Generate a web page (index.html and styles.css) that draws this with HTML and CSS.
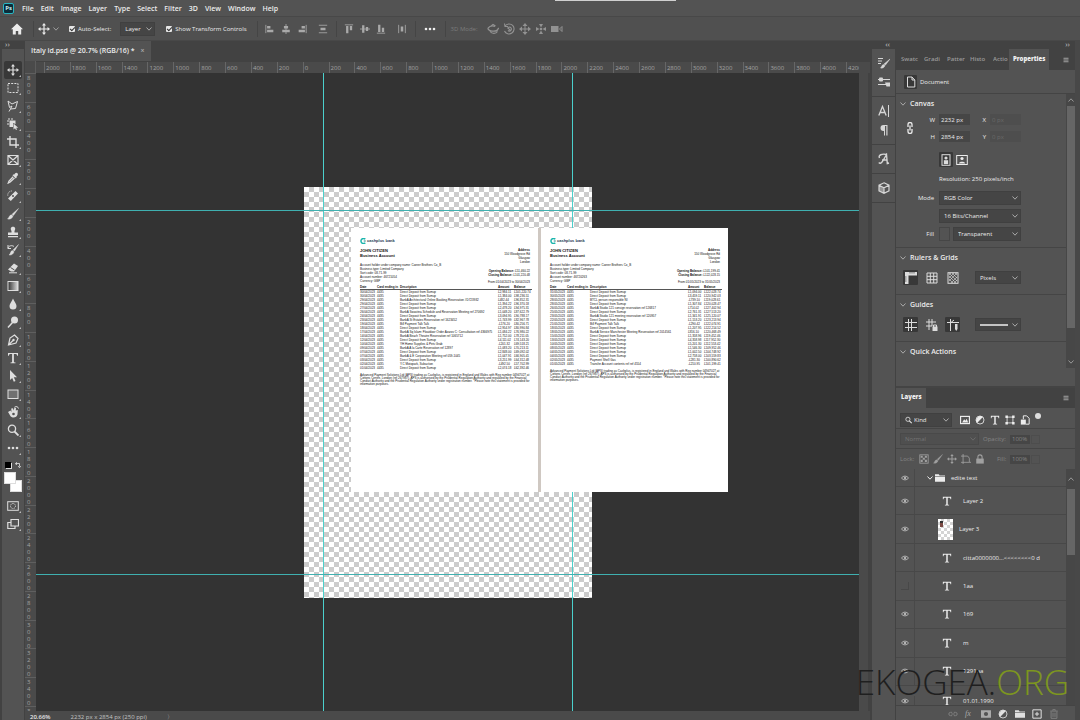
FILE: index.html
```html
<!DOCTYPE html>
<html lang="en">
<head>
<meta charset="utf-8">
<title>Italy id.psd @ 20.7% (RGB/16)</title>
<link rel="stylesheet" href="styles.css">
</head>
<body>
<svg class="sprite" aria-hidden="true">
  <symbol id="chev" viewBox="0 0 8 8"><path d="M1.500 2.500 4 5.200 6.500 2.500" fill="none" stroke="currentColor"/></symbol>
  <symbol id="home" viewBox="0 0 12 12"><path d="M6 .5 0 6.200h1.800V11.500H4.800V8h2.400v3.500h3V6.200H12z"/></symbol>
  <symbol id="move" viewBox="0 0 12 12"><path d="M6 0 8 2.500H6.600V5.400H9.500V4L12 6 9.500 8V6.600H6.600V9.500H8L6 12 4 9.500H5.400V6.600H2.500V8L0 6 2.500 4V5.400H5.400V2.500H4z"/></symbol>
  <symbol id="marquee" viewBox="0 0 12 12"><rect x="1" y="1.500" width="10" height="9" fill="none" stroke="currentColor" stroke-dasharray="2 1.200"/></symbol>
  <symbol id="lasso" viewBox="0 0 12 12"><path d="M1 1 5 4 10.500 1.500 8.500 8.500 3.500 9 5 6 2.500 7.500ZM3.500 9 2 11.500" fill="none" stroke="currentColor"/></symbol>
  <symbol id="objsel" viewBox="0 0 12 12"><path d="M1 7V1h6" fill="none" stroke="currentColor" stroke-dasharray="2 1"/><path d="M2.500 2.500h6v3.500L6 5v4H2.500z"/><path d="M6.500 5.500v6L8 10.200 9 12l1-.5-.8-1.800h2z"/></symbol>
  <symbol id="crop" viewBox="0 0 12 12"><path d="M3 0V9H12M0 3H9V12" fill="none" stroke="currentColor" stroke-width="1.400"/></symbol>
  <symbol id="frame" viewBox="0 0 12 12"><path d="M1 1.500H11V10.500H1ZM1 1.500 11 10.500M11 1.500 1 10.500" fill="none" stroke="currentColor" stroke-width="1.200"/></symbol>
  <symbol id="dropper" viewBox="0 0 12 12"><path d="M8 1.500c1.500-2 4 .3 2.500 2.200L9.300 5l.5.600-1 1L5.500 3.300l1-1 .500.400z"/><path d="M6.200 4.700 2 9l-.7 2L3.200 10 7.500 6" fill="none" stroke="currentColor" stroke-width="1.300"/></symbol>
  <symbol id="heal" viewBox="0 0 12 12"><path d="M8.500 1 11 3.500 3.800 11 1 8.500z"/><path d="M5 6h2M6 5v2" stroke="#535353"/><path d="M.8 5.500A4 4 0 0 1 5 1" fill="none" stroke="currentColor" stroke-dasharray="1 1"/></symbol>
  <symbol id="brush" viewBox="0 0 12 12"><path d="M11.500.5 6.500 7.500 5 6.200ZM4.500 6.800 6 8C5.500 10.500 3 11.500.5 11 2.300 10 1.800 7.200 4.500 6.800Z" stroke="currentColor" stroke-width=".4"/></symbol>
  <symbol id="stamp" viewBox="0 0 12 12"><path d="M4.500 5C3 2.500 4 .8 6 .8S9 2.500 7.500 5V6.500H11V9H1V6.500H4.500ZM1 10H11v1.200H1z"/></symbol>
  <symbol id="history" viewBox="0 0 12 12"><path d="M11.500.5 7.500 7 6 6ZM5.500 6.500 7 7.800C6.500 10 4.500 11.500 2 11 3.800 10 3 7.200 5.500 6.500Z" stroke="currentColor" stroke-width=".4"/><path d="M1 4.500C1.500 1.500 5 1 7 2.500M1 1V4.500H4" fill="none" stroke="currentColor"/></symbol>
  <symbol id="eraser" viewBox="0 0 12 12"><path d="M7 1.500 11 4 7 9.500H4L1 7.500z"/><path d="M3.500 5.500 7.500 8" stroke="#535353"/><path d="M2 10.800H10" stroke="currentColor"/></symbol>
  <symbol id="grad" viewBox="0 0 12 12"><linearGradient id="gf"><stop offset="0" stop-color="#333"/><stop offset="1" stop-color="#ddd"/></linearGradient><rect x="1" y="1.500" width="10" height="9" fill="url(#gf)" stroke="currentColor"/></symbol>
  <symbol id="blur" viewBox="0 0 12 12"><path d="M6 .5C7 3.500 9.500 5.500 9.500 8a3.500 3.500 0 0 1-7 0C2.500 5.500 5 3.500 6 .5Z"/></symbol>
  <symbol id="dodge" viewBox="0 0 12 12"><circle cx="7.500" cy="4" r="3.500"/><path d="M5.500 6.500 1 11.500" stroke="currentColor" stroke-width="1.500"/></symbol>
  <symbol id="pen" viewBox="0 0 12 12"><path d="M7.500 1 11 4.500 9 9 1.500 11 3 4Z M1.500 11 6 6.500" fill="none" stroke="currentColor" stroke-width="1.200"/><circle cx="6.500" cy="6" r="1.200"/></symbol>
  <symbol id="type" viewBox="0 0 12 12"><path d="M1 1H11V3.800H10.200C10 2.500 9.500 2 8.500 2H6.900V9.500c0 .8.400 1 1.600 1V11.300H3.500V10.500c1.200 0 1.600-.2 1.600-1V2H3.500C2.500 2 2 2.500 1.800 3.800H1z"/></symbol>
  <symbol id="arrow" viewBox="0 0 12 12"><path d="M3 0 10 7.200H6.800L8.500 11 6.800 11.700 5.200 8 3 10z"/></symbol>
  <symbol id="rect" viewBox="0 0 12 12"><rect x="1" y="2" width="10" height="8.500" fill="#707070" stroke="currentColor"/></symbol>
  <symbol id="hand" viewBox="0 0 12 12"><path d="M1 6 3.500 4.500 4.500 6 4.200 2.500 6 2.200 6.500 4.500 7.500 1.500 9 2 8.800 4.500 10.800 4 10.500 8.500C10 11 7.500 12 5 11.300 3 10.500 2.500 8 1 6Z"/><path d="M7.500 1.200C9 0 11 .5 11.500 2.500" fill="none" stroke="currentColor"/><circle cx="6.500" cy="8" r="1.300" fill="#535353"/></symbol>
  <symbol id="zoom" viewBox="0 0 12 12"><circle cx="5" cy="4.800" r="3.600" fill="none" stroke="currentColor" stroke-width="1.300"/><path d="M7.500 7.500 11.500 11.500" stroke="currentColor" stroke-width="1.800"/></symbol>
  <symbol id="dots" viewBox="0 0 12 12"><circle cx="2" cy="6" r="1.300"/><circle cx="6" cy="6" r="1.300"/><circle cx="10" cy="6" r="1.300"/></symbol>
  <symbol id="mask" viewBox="0 0 12 12"><rect x=".7" y="1.700" width="10.600" height="8.600" fill="none" stroke="currentColor"/><circle cx="6" cy="6" r="2.500" fill="none" stroke="currentColor" stroke-dasharray="1 .7"/></symbol>
  <symbol id="screen" viewBox="0 0 12 12"><path d="M4 1.500H11.500V8H4ZM4 4.500H.8V10.500H8V8" fill="none" stroke="currentColor" stroke-width="1.200"/></symbol>
  <symbol id="al" viewBox="0 0 12 12"><path d="M1 1v10" stroke="currentColor"/><path d="M2.500 2.500h4v2.800h-4zM2.500 7h7.500v2.800H2.500z"/></symbol>
  <symbol id="ac" viewBox="0 0 12 12"><path d="M6 0v12" stroke="currentColor"/><path d="M3.500 2.500h5v2.800h-5zM1.500 7h9v2.800h-9z"/></symbol>
  <symbol id="ar" viewBox="0 0 12 12"><path d="M11 1v10" stroke="currentColor"/><path d="M5.500 2.500h4v2.800h-4zM2 7h7.500v2.800H2z"/></symbol>
  <symbol id="dv" viewBox="0 0 12 12"><path d="M1 1.500h10M1 10.500h10" stroke="currentColor"/><path d="M3 4.500h6v3H3z"/></symbol>
  <symbol id="at" viewBox="0 0 12 12"><path d="M1 1h10" stroke="currentColor"/><path d="M2.500 2.500h2.800V11H2.500zM7 2.500h2.800v5H7z"/></symbol>
  <symbol id="am" viewBox="0 0 12 12"><path d="M0 6h12" stroke="currentColor"/><path d="M2.500 1.500h2.800v9H2.500zM7 3.500h2.800v5H7z"/></symbol>
  <symbol id="ab" viewBox="0 0 12 12"><path d="M1 11h10" stroke="currentColor"/><path d="M2.500 1h2.800v8.500H2.500zM7 4.500h2.800v5H7z"/></symbol>
  <symbol id="dh" viewBox="0 0 12 12"><path d="M2 1v10M10 1v10" stroke="currentColor"/><path d="M4.500 3h3v6h-3z"/></symbol>
  <symbol id="orbit" viewBox="0 0 12 12"><path d="M11 6A5 2.500 0 1 1 8 3.300M3 8.500C5 11 9 11 10.500 8.500M3.500 3.500 6 1.500 8.500 3M10.500 6.500 12 5" fill="none" stroke="currentColor" stroke-width="1.200"/></symbol>
  <symbol id="roll" viewBox="0 0 12 12"><path d="M2 3A5 5 0 1 1 1.500 8M1.500.5 2 3.500H5M4.500 5.500A2 2 0 1 1 5 7.500M4.500 4.500 8 8" fill="none" stroke="currentColor" stroke-width="1.100"/></symbol>
  <symbol id="pan3" viewBox="0 0 12 12"><path d="M6 0 8.500 3H3.500ZM6 12 3.500 9H8.500ZM0 6 3 3.500V8.500ZM12 6 9 8.500V3.500Z"/><path d="M6 2v8M2 6h8" stroke="currentColor"/></symbol>
  <symbol id="slide3" viewBox="0 0 12 12"><circle cx="6" cy="6" r="1.300"/><path d="M6 4.500 4 1H8ZM6 7.500 8 11H4ZM4.500 6 1 8V4ZM7.500 6 11 4V8Z"/></symbol>
  <symbol id="cam" viewBox="0 0 12 12"><path d="M0 3H7.500V9H0Z"/><path d="M11 3.500 8.500 6 11 8.500Z" fill="none" stroke="currentColor"/></symbol>
  <symbol id="bset" viewBox="0 0 12 12"><path d="M0 1.500h5M0 4h4M0 6.500h3" stroke="currentColor"/><path d="M12 2 7.500 8 6 7ZM5.500 7.500 7 8.500C6.500 10.500 4.500 11.500 2.500 11 4 10 3.500 8 5.500 7.500Z" stroke="currentColor" stroke-width=".5"/></symbol>
  <symbol id="adj" viewBox="0 0 12 12"><path d="M0 3.500h12M0 8.500h12" stroke="currentColor" stroke-width="1.200"/><rect x="1" y="1.500" width="4" height="4" rx="1"/><path d="M7 6.500h5v4H8.500z"/></symbol>
  <symbol id="char" viewBox="0 0 12 12"><path d="M.8 10.500 4.500 1.500 8.200 10.500M2 7.500H7" fill="none" stroke="currentColor" stroke-width="1.300"/><path d="M10.500 0v12" stroke="currentColor"/></symbol>
  <symbol id="para" viewBox="0 0 12 12"><path d="M9.500 1H5.500a3 3 0 0 0 0 6H6v4.500h1V2h1.300v9.500h1.200z"/></symbol>
  <symbol id="glyph" viewBox="0 0 12 12"><path d="M.8 9.500C3 12 5 8 8.500 1.500L9.300 10.500 11 10M4 7H9M1.500 5C0 2 4 .5 8.500 1.500" fill="none" stroke="currentColor" stroke-width="1.400"/></symbol>
  <symbol id="cube" viewBox="0 0 12 12"><path d="M6 .8 11 3.200V8.800L6 11.300 1 8.800V3.200ZM1 3.200 6 5.800 11 3.200M6 5.800V11.300" fill="none" stroke="currentColor" stroke-width="1.200"/><path d="M6 6 1 3.500V8.800L6 11z" opacity=".5"/></symbol>
  <symbol id="doc" viewBox="0 0 12 12"><path d="M2.500 1H7L9.800 4V11H2.500ZM7 1V4H9.800" fill="none" stroke="currentColor"/></symbol>
  <symbol id="link" viewBox="0 0 12 12"><path d="M4 5V2.500a2 2 0 0 1 4 0V5M4 7V9.500a2 2 0 0 0 4 0V7M6 3.500v5" fill="none" stroke="currentColor" stroke-width="1.300"/></symbol>
  <symbol id="chain" viewBox="0 0 12 12"><path d="M5 4H3a2 2 0 0 0 0 4H5M7 4H9a2 2 0 0 1 0 4H7M4 6h4" fill="none" stroke="currentColor" stroke-width="1.200"/></symbol>
  <symbol id="port" viewBox="0 0 12 12"><rect x="2" y=".7" width="8" height="10.600" fill="none" stroke="currentColor"/><circle cx="6" cy="4" r="1.600"/><path d="M3.800 6.200h4.400v4H3.800z"/></symbol>
  <symbol id="land" viewBox="0 0 12 12"><rect x=".7" y="1.500" width="10.600" height="9" fill="none" stroke="currentColor"/><circle cx="6" cy="4.500" r="1.600"/><path d="M2.800 9.500C3 7 9 7 9.200 9.500z"/></symbol>
  <symbol id="ruler" viewBox="0 0 12 12"><path d="M0 0H12V3.500H3.500V12H0z"/><path d="M5 0v1.500M7 0v1.500M9 0v1.500M0 5h1.500M0 7h1.500M0 9h1.500" stroke="#333" stroke-width=".7"/></symbol>
  <symbol id="grid" viewBox="0 0 12 12"><path d="M1 1H11V11H1ZM4.300 1V11M7.700 1V11M1 4.300H11M1 7.700H11" fill="none" stroke="currentColor"/></symbol>
  <symbol id="pix" viewBox="0 0 12 12"><rect x="1" y=".7" width="10" height="10.600" fill="none" stroke="currentColor"/><path d="M2 3 4 1M2 6 7 1M2 9 10 1M4 11 10 5M7 11 10 8M8 1 10 3M5 1 10 6M2 1 10 9M2 4 9 11M2 7 6 11" stroke="currentColor" stroke-width=".6"/></symbol>
  <symbol id="guide" viewBox="0 0 12 12"><path d="M3.500 0V12M6.500 0V12M0 3.500H12M0 8.500H12" stroke="currentColor"/></symbol>
  <symbol id="glock" viewBox="0 0 12 12"><path d="M3 0V11M6 0V7M0 3H10M0 7H6" stroke="currentColor"/><path d="M6.500 7.500h5V12h-5z"/><path d="M7.500 8V6h3v2" fill="none" stroke="currentColor"/></symbol>
  <symbol id="gsmart" viewBox="0 0 12 12"><path d="M3.500 0V12M0 3.500H12M4 3.500 7 1" stroke="currentColor"/><path d="M8 5h2.500v5L9.200 12 8 10z"/></symbol>
  <symbol id="menu" viewBox="0 0 12 12"><path d="M1 2.500h10M1 6h10M1 9.500h10" stroke="currentColor" stroke-width="1.600"/></symbol>
  <symbol id="image" viewBox="0 0 12 12"><rect x=".7" y="1.700" width="10.600" height="8.600" fill="none" stroke="currentColor" stroke-width="1.400"/><path d="M2.500 9 5 5 6.500 7 8 4.500 9.800 9z"/></symbol>
  <symbol id="half" viewBox="0 0 12 12"><circle cx="6" cy="6" r="4.800" fill="none" stroke="currentColor"/><path d="M2.500 9.500A5 5 0 0 1 9.500 2.500z"/></symbol>
  <symbol id="shape" viewBox="0 0 12 12"><path d="M2.500 2.500h7v7h-7z" fill="none" stroke="currentColor"/><path d="M.5.500h3v3h-3zM8.500.5h3v3h-3zM.5 8.500h3v3h-3zM8.500 8.500h3v3h-3z"/></symbol>
  <symbol id="smart" viewBox="0 0 12 12"><path d="M4 5V1H8L11 4V11H7" fill="none" stroke="currentColor" stroke-width="1.200"/><path d="M1 5.500h6v6H1z"/></symbol>
  <symbol id="checks" viewBox="0 0 12 12"><rect x="1" y="1" width="10" height="10" fill="none" stroke="currentColor"/><path d="M2 2h2.500v2.500H2zM7 2h2.500v2.500H7zM4.500 4.500H7V7H4.500zM2 7h2.500v2.500H2zM7 7h2.500v2.500H7z"/></symbol>
  <symbol id="artb" viewBox="0 0 12 12"><path d="M2.500 0V12M0 2.500H8L10 5V10H0M10 10h2" fill="none" stroke="currentColor"/></symbol>
  <symbol id="lock" viewBox="0 0 12 12"><path d="M1.500 5.500h9v6h-9z"/><path d="M3.500 6V3.500a2.500 2.500 0 0 1 5 0V6" fill="none" stroke="currentColor" stroke-width="1.300"/></symbol>
  <symbol id="eye" viewBox="0 0 12 12"><path d="M.7 6C3 2.300 9 2.300 11.300 6 9 9.700 3 9.700.7 6Z" fill="none" stroke="currentColor" stroke-width="1.400"/><circle cx="6" cy="6" r="1.900"/></symbol>
  <symbol id="folder" viewBox="0 0 12 12"><path d="M0 1.500H4.500L5.500 3H12V10.500H0z"/><path d="M0 4.200H12" stroke="#535353" stroke-width=".7"/></symbol>
  <symbol id="lmask" viewBox="0 0 12 12"><path d="M0 1.500H12V10.500H0z"/><circle cx="6" cy="6" r="2.500" fill="#535353"/></symbol>
  <symbol id="new" viewBox="0 0 12 12"><path d="M1 1H11V11H1ZM6 3.500v5M3.500 6h5" fill="none" stroke="currentColor" stroke-width="1.200"/></symbol>
  <symbol id="trash" viewBox="0 0 12 12"><path d="M1.500 2.500h9M4.500 2V.8h3V2M2.500 3V11.200H9.500V3M4.800 4.500v5M7.200 4.500v5" fill="none" stroke="currentColor" stroke-width="1.200"/></symbol>
  <symbol id="cash" viewBox="0 0 12 12"><path d="M10.500 2.500A5 5 0 1 0 10.500 9.500" fill="none" stroke="#1cb5ac" stroke-width="3"/><path d="M7.500 6h4" stroke="#1d7f86" stroke-width="2"/></symbol>
</svg>

<header class="menubar">
  <span class="ps">Ps</span>
  <nav class="menus">
    <a href="#">File</a><a href="#">Edit</a><a href="#">Image</a><a href="#">Layer</a><a href="#">Type</a><a href="#">Select</a><a href="#">Filter</a><a href="#">3D</a><a href="#">View</a><a href="#">Window</a><a href="#">Help</a>
  </nav>
  <i class="edge"></i>
</header>

<div class="options">
  <button class="ib home" aria-label="Home"><svg class="i12"><use href="#home"/></svg></button>
  <div class="group">
    <svg class="i12"><use href="#move"/></svg><svg class="i8 dim"><use href="#chev"/></svg>
    <label class="check auto"><input type="checkbox" checked>Auto-Select:</label>
    <span class="select layer"><select aria-label="Auto-select target"><option>Layer</option></select><svg class="i8"><use href="#chev"/></svg></span>
    <label class="check show"><input type="checkbox" checked>Show Transform Controls</label>
  </div>
  <div class="group aligns">
    <button class="ib" aria-label="Align left"><svg class="i10"><use href="#al"/></svg></button>
    <button class="ib" aria-label="Align centers"><svg class="i10"><use href="#ac"/></svg></button>
    <button class="ib" aria-label="Align right"><svg class="i10"><use href="#ar"/></svg></button>
    <button class="ib far" aria-label="Distribute vertically"><svg class="i10"><use href="#dv"/></svg></button>
  </div>
  <div class="group aligns">
    <button class="ib" aria-label="Align top"><svg class="i10"><use href="#at"/></svg></button>
    <button class="ib" aria-label="Align middle"><svg class="i10"><use href="#am"/></svg></button>
    <button class="ib" aria-label="Align bottom"><svg class="i10"><use href="#ab"/></svg></button>
    <button class="ib far" aria-label="Distribute horizontally"><svg class="i10"><use href="#dh"/></svg></button>
  </div>
  <div class="group more"><button class="ib" aria-label="More"><svg class="i12"><use href="#dots"/></svg></button></div>
  <div class="group mode3d">
    <span>3D Mode:</span>
    <svg class="i12"><use href="#orbit"/></svg><svg class="i12"><use href="#roll"/></svg><svg class="i12"><use href="#pan3"/></svg><svg class="i12"><use href="#slide3"/></svg><svg class="i12"><use href="#cam"/></svg>
  </div>
</div>

<main class="work">
  <aside class="tools">
    <div class="dockhead left">››</div>
    <div class="toollist" id="tools"></div>
    <div class="minis"><i class="bw"></i><svg class="i6" viewBox="0 0 12 12"><path d="M2 5V3H9V9M4 .5 1 3 4 5.500M6.500 8 9 11.500 11.500 8" fill="none" stroke="currentColor" stroke-width="1.500"/></svg></div>
    <div class="swatches"><button class="bg" aria-label="Background color"></button><button class="fg" aria-label="Foreground color"></button></div>
    <button class="tool" aria-label="Quick mask"><svg class="i12"><use href="#mask"/></svg></button>
    <button class="tool" aria-label="Screen mode"><svg class="i12"><use href="#screen"/></svg></button>
  </aside>

  <section class="document">
    <div class="tabbar"><div class="tab">Italy id.psd @ 20.7% (RGB/16) *<button aria-label="Close tab">×</button></div></div>
    <div class="stage">
      <div class="corner"></div>
      <div class="hruler" id="hruler"></div>
      <div class="vruler" id="vruler"></div>
      <div class="canvas">
        <div class="artboard"></div>
        <i class="guide v one"></i><i class="guide v two"></i><i class="guide h one"></i><i class="guide h two"></i>
        <div class="pages" id="pages"></div>
      </div>
      <div class="vscroll"></div>
    </div>
    <footer class="status"><b>20.66%</b><span>2232 px x 2854 px (250 ppi)</span><span>〉</span></footer>
  </section>

  <aside class="dock">
    <div class="dockhead">‹‹</div>
    <div class="dgroup"><svg class="i12"><use href="#bset"/></svg><svg class="i12"><use href="#adj"/></svg></div>
    <div class="dgroup"><svg class="i12"><use href="#char"/></svg><svg class="i12"><use href="#para"/></svg></div>
    <div class="dgroup short"><svg class="i12"><use href="#glyph"/></svg></div>
    <div class="dgroup short"><svg class="i12"><use href="#cube"/></svg></div>
  </aside>

  <aside class="panels">
    <div class="dockhead">››</div>
    <div class="ptabs"><span>Swatc</span><span>Gradi</span><span>Patter</span><span>Histo</span><span>Actio</span><b>Properties</b><svg class="i8"><use href="#menu"/></svg></div>
    <div class="props">
      <div class="docrow"><span class="press"><svg class="i12"><use href="#doc"/></svg></span>Document</div>
      <div class="propbody">
        <div class="sections">
          <section class="sec canvas-sec">
            <h2><svg class="i8"><use href="#chev"/></svg>Canvas</h2>
            <div class="size">
              <svg class="i12 linkic"><use href="#link"/></svg>
              <label for="w">W</label><input id="w" value="2232 px">
              <label for="x">X</label><input id="x" value="0 px" disabled>
              <label for="h">H</label><input id="h" value="2854 px">
              <label for="y">Y</label><input id="y" value="0 px" disabled>
            </div>
            <div class="orient"><button class="press" aria-label="Portrait"><svg class="i12"><use href="#port"/></svg></button><button class="ib" aria-label="Landscape"><svg class="i12"><use href="#land"/></svg></button></div>
            <p class="res">Resolution: 250 pixels/inch</p>
            <div class="form">
              <label for="mode">Mode</label><span class="select"><select id="mode"><option>RGB Color</option></select><svg class="i8"><use href="#chev"/></svg></span>
              <span></span><span class="select"><select aria-label="Bit depth"><option>16 Bits/Channel</option></select><svg class="i8"><use href="#chev"/></svg></span>
              <label for="fill">Fill</label><div class="fillrow"><i class="swatch"></i><span class="select"><select id="fill"><option>Transparent</option></select><svg class="i8"><use href="#chev"/></svg></span></div>
            </div>
          </section>
          <section class="sec">
            <h2><svg class="i8"><use href="#chev"/></svg>Rulers &amp; Grids</h2>
            <div class="icons"><button class="press" aria-label="Rulers"><svg class="i12"><use href="#ruler"/></svg></button><button class="flat" aria-label="Grid"><svg class="i12"><use href="#grid"/></svg></button><button class="flat" aria-label="Pixel grid"><svg class="i12"><use href="#pix"/></svg></button><span class="select"><select aria-label="Units"><option>Pixels</option></select><svg class="i8"><use href="#chev"/></svg></span></div>
          </section>
          <section class="sec">
            <h2><svg class="i8"><use href="#chev"/></svg>Guides</h2>
            <div class="icons"><button class="press" aria-label="Show guides"><svg class="i12"><use href="#guide"/></svg></button><button class="flat" aria-label="Lock guides"><svg class="i12"><use href="#glock"/></svg></button><button class="press" aria-label="Smart guides"><svg class="i12"><use href="#gsmart"/></svg></button><span class="select stroke"><select aria-label="Guide style"><option></option></select><svg class="i8"><use href="#chev"/></svg></span></div>
          </section>
          <section class="sec"><h2><svg class="i8"><use href="#chev"/></svg>Quick Actions</h2></section>
        </div>
        <div class="pscroll"><svg class="i8 up"><use href="#chev"/></svg><i></i><svg class="i8"><use href="#chev"/></svg></div>
      </div>
    </div>
    <div class="layers">
      <div class="ptabs ltabs"><b>Layers</b><svg class="i8"><use href="#menu"/></svg></div>
      <div class="filter">
        <span class="select kind"><svg class="i8 mag"><use href="#zoom"/></svg><select aria-label="Filter kind"><option>Kind</option></select><svg class="i8"><use href="#chev"/></svg></span>
        <svg class="i10"><use href="#image"/></svg><svg class="i10"><use href="#half"/></svg><svg class="i10"><use href="#type"/></svg><svg class="i10"><use href="#shape"/></svg><svg class="i10"><use href="#smart"/></svg><i class="toggle"></i>
      </div>
      <div class="blend">
        <span class="select"><select aria-label="Blend mode" disabled><option>Normal</option></select><svg class="i8"><use href="#chev"/></svg></span>
        <label for="op">Opacity:</label><input id="op" value="100%" disabled><i class="drop"></i>
      </div>
      <div class="locks">
        <span>Lock:</span><svg class="i10"><use href="#checks"/></svg><svg class="i10"><use href="#brush"/></svg><svg class="i10"><use href="#move"/></svg><svg class="i10"><use href="#artb"/></svg><svg class="i10"><use href="#lock"/></svg>
        <label for="fl">Fill:</label><input id="fl" value="100%" disabled><i class="drop"></i>
      </div>
      <div class="listwrap">
        <div class="list" id="layers"></div>
        <div class="lscroll"><svg class="i8 up"><use href="#chev"/></svg><i></i></div>
      </div>
      <div class="lfoot">
        <svg class="i10 dim"><use href="#chain"/></svg><em>fx</em><svg class="i10"><use href="#lmask"/></svg><svg class="i10 hi"><use href="#half"/></svg><svg class="i10 hi"><use href="#folder"/></svg><svg class="i10 hi"><use href="#new"/></svg><svg class="i10 dim"><use href="#trash"/></svg>
      </div>
    </div>
  </aside>
  <div class="gutter"></div>
</main>
<div class="watermark">EKOGEA.<span>ORG</span></div>
<script src="script.js"></script>
</body>
</html>
```

FILE: styles.css
```css
* { box-sizing: border-box; }
body {
  margin: 0; height: 100vh; display: flex; flex-direction: column; overflow: hidden;
  background: #535353; color: #ececec;
  font: 6px/8px "Open Sans", "Noto Sans", sans-serif;
}
svg { fill: currentColor; flex: none; display: block; }
.sprite { position: absolute; width: 0; height: 0; }
.i6 { width: 6px; height: 6px; }
.i8 { width: 8px; height: 8px; }
.i10 { width: 10px; height: 10px; }
.i12 { width: 12px; height: 12px; }
button, input, select { font: inherit; color: inherit; margin: 0; padding: 0; border: 0; background: none; }
button { display: grid; place-items: center; }
a { color: inherit; text-decoration: none; }
.dim { opacity: .5; }

.menubar { height: 17px; flex: none; display: flex; align-items: center; padding: 1px 0 0 3px; border-bottom: 1px solid #484848; }
.ps { width: 11px; height: 11px; border: 1px solid #29b6c2; border-radius: 2px; background: #0b2c3a; color: #cdeef2; font-weight: 700; font-size: 6px; text-align: center; }
.menus { display: flex; gap: 7px; margin-left: 8px; font-size: 7px; font-weight: 600; }
.edge { position: absolute; top: 0; left: 51.4%; width: 11.2%; height: 1px; background: #d0d0d0; }

.options { height: 24px; flex: none; display: flex; align-items: center; background: #505050; border-bottom: 1px solid #484848; }
.home { margin: 0 10px 0 11px; }
.group { height: 16px; display: flex; align-items: center; border-left: 1px solid #454545; padding-left: 4px; }
.group > .dim { margin-left: 2px; }
.check { display: flex; align-items: center; gap: 3px; white-space: nowrap; }
.check input { appearance: none; width: 6px; height: 6px; border-radius: 1px; background: #e6e6e6; display: grid; place-items: center; }
.check input::before { content: ""; width: 4px; height: 2px; border: solid #333; border-width: 0 0 1px 1px; transform: rotate(-45deg); }
.auto { margin-left: 9px; }
.show { margin: 0 10px 0 11px; }
.select { display: flex; align-items: center; height: 14px; background: #454545; border: 1px solid #404040; padding-right: 1px; }
.select select { appearance: none; flex: 1; min-width: 0; padding-left: 4px; outline: 0; }
.select svg { color: #aaa; }
.layer { width: 35px; margin-left: 9px; }
.aligns { color: #a9a9a9; gap: 6px; padding: 0 8px 0 7px; }
.aligns .far { margin-left: 5px; }
.more { padding: 0 9px 0 8px; color: #f0f0f0; }
.mode3d { color: #7c7c7c; gap: 4px; padding-left: 5px; }
.mode3d span { margin-right: 5px; }
.mode3d svg { color: #929292; }

.work { flex: 1; min-height: 0; display: flex; }
.dockhead { height: 8px; flex: none; background: #424242; color: #c8c8c8; font-size: 8px; line-height: 6px; text-align: right; padding-right: 5px; }
.dockhead.left { text-align: left; padding-left: 3px; }
.tools { width: 25px; flex: none; border: solid #424242; border-width: 0 1px 0 2px; display: flex; flex-direction: column; align-items: center; }
.tools .dockhead { align-self: stretch; }
.toollist { padding-top: 12px; }
.tool { width: 18px; height: 18px; position: relative; color: #dedede; }
.tool.on { background: #383838; border-radius: 2px; }
.tool::after { content: ""; position: absolute; right: 1px; bottom: 2px; border: 1px solid; border-color: transparent #bbb #bbb transparent; }
.minis { display: flex; gap: 4px; height: 15px; align-items: center; }
.bw { width: 6px; height: 6px; background: #000; box-shadow: 1px 1px 0 #ddd; }
.swatches { width: 18px; height: 20px; position: relative; margin-bottom: 5px; }
.swatches button { position: absolute; width: 12px; height: 12px; background: #fff; border: 1px solid #ddd; }
.swatches .fg { left: 0; top: 0; }
.swatches .bg { right: 0; bottom: 0; }

.document { flex: 1; min-width: 0; display: flex; flex-direction: column; }
.tabbar { height: 20px; flex: none; background: #424242; display: flex; }
.tab { display: flex; align-items: center; gap: 6px; padding: 0 6px; background: #535353; font-weight: 600; font-size: 7px; color: #ececec; white-space: nowrap; }
.tab button { color: #aaa; }
.stage { flex: 1; min-height: 0; display: grid; grid-template: 12px minmax(0, 1fr) / 11px minmax(0, 1fr) 11px; }
.corner, .hruler, .vruler { background: #4a4a4a; color: #a4a4a4; }
.corner { border-right: 1px solid #5c5c5c; }
.hruler { grid-column: 2 / 4; padding: 0 11px 0 8px; display: grid; grid-template-columns: repeat(31, minmax(0, 1fr)) 13px; overflow: hidden; border-top: 1px solid #424242; }
.hruler span { border-left: 1px solid #666; padding-left: 1px; line-height: 13px; overflow: hidden; }
.vruler { display: grid; grid-template-rows: repeat(22, minmax(0, 1fr)) 5px; overflow: hidden; }
.vruler span { border-top: 1px solid #5f5f5f; padding: 1px 0 0 2px; display: flex; flex-direction: column; line-height: 7px; overflow: hidden; }
.canvas { background: #333; position: relative; overflow: hidden; }
.vscroll { background: #4a4a4a; border-right: 2px solid #424242; }
.artboard { position: absolute; left: 268px; top: 114px; width: 288px; height: 411px; background: repeating-conic-gradient(#ccc 0 25%, #fff 0 50%) 0 0 / 10px 10px; }
.guide { position: absolute; background: #3fb0b0; }
.guide.v { width: 1px; top: 0; bottom: 0; background: #4bd0cc; }
.guide.h { height: 1px; left: 0; right: 0; }
.guide.v.one { left: 287px; }
.guide.v.two { left: 536px; }
.guide.h.one { top: 137px; }
.guide.h.two { top: 501px; }
.status { height: 9px; flex: none; background: #4a4a4a; display: flex; gap: 20px; padding-left: 5px; color: #c4c4c4; white-space: nowrap; line-height: 12px; overflow: hidden; }
.status b { color: #e8e8e8; font-weight: 600; }

.pages { position: absolute; left: 315px; top: 155px; display: flex; gap: 3px; background: #cfc8c2; color: #111; font: 3px/4px "Liberation Sans", sans-serif; }
.page { width: 187px; height: 264px; background: #fff; padding: 9px 6px 0 9px; }
.logo { display: flex; align-items: center; gap: 1px; height: 7px; font-size: 4px; font-weight: 700; color: #243a52; }
.who { display: flex; justify-content: space-between; margin-top: 4px; height: 15px; }
.who strong { display: block; font-size: 4px; line-height: 5px; }
.who div:last-child, .bal { text-align: right; padding-right: 2px; }
.acct { display: flex; justify-content: space-between; height: 22px; }
.bal { padding-top: 6px; }
.bal p { margin: 3px 0 0; }
.page table { width: 100%; border-collapse: collapse; table-layout: fixed; }
.page th { text-align: left; line-height: 4px; border-bottom: 1px solid #555; }
.page td, .page th { padding: 0; white-space: nowrap; }
.page .c1 { width: 17px; } .page .c2 { width: 23px; } .page .c4 { width: 16px; } .page .c5 { width: 18px; }
.page small { display: block; margin-top: 4px; font-size: 3px; line-height: 3px; }

.dock { width: 26px; flex: none; border: solid #424242; border-width: 0 1px 0 2px; color: #d6d6d6; }
.dgroup { height: 48px; border-bottom: 1px solid #424242; display: flex; flex-direction: column; align-items: center; justify-content: center; gap: 7px; }
.dgroup.short { height: 29px; }

.panels { width: 179px; flex: none; display: flex; flex-direction: column; }
.gutter { width: 5px; flex: none; background: #484848; }
.ptabs { height: 21px; flex: none; background: #424242; display: flex; align-items: stretch; line-height: 20px; color: #9a9a9a; font-weight: 600; padding: 0 6px 0 5px; }
.ptabs span { width: 23px; overflow: hidden; }
.ptabs span:nth-child(5) { width: 16px; }
.ptabs b { background: #535353; color: #f0f0f0; padding: 0 4px; width: 40px; }
.ptabs svg { margin: auto 0 auto auto; width: 6px; color: #bbb; }
.ltabs { padding-left: 0; height: 20px; }
.ltabs b { width: 30px; padding-left: 5px; line-height: 19px; }
.props { flex: none; display: flex; flex-direction: column; }
.docrow { height: 24px; border-bottom: 1px solid #444; display: flex; align-items: center; gap: 3px; padding-left: 8px; }
.press, .flat { width: 15px; height: 15px; display: grid; place-items: center; color: #dcdcdc; }
.press { background: #383838; border-radius: 1px; }
.docrow .press { width: 13px; height: 14px; }
.propbody { display: flex; height: 274px; }
.sections { flex: 1; }
.sec { border-bottom: 1px solid #454545; height: 47px; }
.sec:last-child { border: 0; }
.canvas-sec { height: 154px; }
.sec h2 { margin: 0; height: 19px; display: flex; align-items: center; gap: 3px; padding-left: 3px; font-size: 7px; font-weight: 600; }
.sec h2 svg { color: #aaa; }
.size { display: grid; grid-template-columns: 14px 13px 31px 12px 31px; grid-auto-rows: 11px; gap: 6px 4px; align-items: center; padding: 1px 0 0 8px; }
.size label { text-align: right; }
.size input, .blend input, .locks input { min-width: 0; height: 11px; background: #464646; padding-left: 2px; }
.size input:disabled { color: #6a6a6a; background: #4e4e4e; }
.linkic { grid-row: 1 / 3; }
.orient { display: flex; gap: 3px; padding: 10px 0 0 43px; }
.orient .press { width: 14px; height: 15px; }
.res { margin: 8px 0 8px 43px; }
.form { display: grid; grid-template-columns: 38px 82px; gap: 4px 5px; align-items: center; }
.form label { text-align: right; }
.form .select { height: 14px; }
.fillrow { display: flex; gap: 3px; }
.fillrow .select { flex: 1; }
.swatch { width: 11px; border: 1px solid #464646; }
.icons { display: flex; align-items: center; gap: 6px; padding: 3px 0 0 7px; }
.icons .select { width: 46px; height: 13px; margin-left: 9px; }
.stroke select { height: 2px; flex: none; width: 28px; margin-left: 4px; background: #c4c4c4; }
.stroke svg { margin-left: auto; }
.pscroll, .lscroll { width: 9px; flex: none; background: #474747; display: flex; flex-direction: column; align-items: center; color: #999; }
.up { transform: rotate(180deg); }
.pscroll svg { margin: 2px 0; }
.pscroll i { width: 8px; height: 222px; background: #666; }
.pscroll svg:last-child { margin: auto 0 2px; }
.layers { flex: 1; min-height: 0; margin-top: 18px; border-top: 2px solid #444; display: flex; flex-direction: column; }
.layers .ltabs { flex: none; }
.filter { height: 21px; flex: none; display: flex; align-items: center; gap: 5px; padding: 3px 0 0 4px; border-bottom: 1px solid #454545; }
.kind { width: 52px; height: 14px; padding-left: 4px; margin-right: 3px; }
.kind select { padding-left: 2px; }
.kind .mag { width: 7px; color: #eee; }
.toggle { width: 6px; height: 6px; border-radius: 3px; background: #ddd; margin: 0 0 7px; }
.blend, .locks { height: 20px; flex: none; display: flex; align-items: center; color: #858585; }
.blend { border-bottom: 1px solid #454545; padding: 1px 0 0 4px; }
.blend .select { width: 79px; height: 12px; background: #4f4f4f; border-color: #494949; margin-right: 4px; }
.blend .select svg { opacity: .3; }
.blend input, .locks input { width: 20px; height: 9px; }
.blend label { width: 27px; }
.drop { width: 9px; height: 9px; margin-left: 1px; border: 1px solid #4d4d4d; }
.locks { padding-left: 4px; gap: 4px; }
.locks span { width: 15px; }
.locks svg { color: #a0a0a0; }
.locks label { margin-left: 8px; width: 9px; }
.locks .drop { margin-left: -3px; }
.listwrap { flex: 1; min-height: 0; display: flex; }
.list { flex: 1; min-width: 0; display: grid; grid-template-rows: 18px repeat(7, minmax(0, 1fr)) 19px; }
.layer-row { display: flex; align-items: center; border-bottom: 1px solid #484848; overflow: hidden; white-space: nowrap; }
.layer-row:last-child { border: 0; padding-top: 10px; }
.vis { width: 19px; height: 100%; border-right: 1px solid #494949; color: #b4b4b4; }
.hid { width: 8px; height: 8px; border: solid #484848; border-width: 0 1px 1px 0; }
.thumb { width: 20px; margin-left: 22px; display: grid; place-items: center; margin-right: 6px; }
.pic { width: 15px; height: 21px; background: repeating-conic-gradient(#d4d4d4 0 25%, #fff 0 50%) 0 0 / 6px 6px; padding: 2px; }
.pic::before { content: ""; display: block; width: 3px; height: 4px; background: #7b4a44; border-top: 2px solid #333; }
.layer-row.image .thumb { margin: 0 4px 0 20px; }
.layer-row.folder .thumb { margin: 0 7px 0 11px; width: 18px; display: flex; gap: 1px; }
.lscroll svg { margin: 6px 0; }
.lscroll i { width: 8px; height: 66px; background: #666; }
.lfoot { height: 15px; flex: none; border-top: 1px solid #444; display: flex; align-items: center; gap: 7px; padding: 2px 0 0 52px; color: #aaa; }
.lfoot em { width: 9px; font: italic 8px/10px "Liberation Serif", serif; }
.hi { color: #e0e0e0; }
.watermark { position: absolute; right: 11px; bottom: 14px; font: 300 35px/48px "Open Sans", sans-serif; color: #1f1f1f; }
.watermark span { color: #7d9620; }
```

FILE: script.js
```js
const icon = (name, size = 12) => `<svg class="i${size}"><use href="#${name}"/></svg>`;
const put = (id, html) => { document.getElementById(id).innerHTML = html; };

const tools = ["move", "marquee", "lasso", "objsel", "crop", "frame", "dropper", "heal", "brush", "stamp", "history",
  "eraser", "grad", "blur", "dodge", "pen", "type", "arrow", "rect", "hand", "zoom", "dots"];
put("tools", tools.map((t, i) => `<button class="tool${i ? "" : " on"}" aria-label="${t}">${icon(t)}</button>`).join(""));

let h = "", v = "";
for (let n = -2000; n <= 4200; n += 200) h += `<span>${Math.abs(n)}</span>`;
for (let n = -800; n <= 3600; n += 200) {
  v += `<span>${[...String(Math.abs(n))].map(d => `<i style="font-style:normal">${d}</i>`).join("")}</span>`;
}
put("hruler", h);
put("vruler", v);

const D = "Direct Deposit from Sumup";
const statements = [
  {
    account: ["Account holder under company name: Career Brothers Co_B", "Business type: Limited Company", "Sort code: 08-71-99", "Account number: 46721054", "Currency: GBP"],
    open: "£51,460.22", close: "£101,220.48", period: "From 01/04/2023 to 30/04/2023",
    rows: [
      ["30/04/2023", D, "£2,984.11", "£101,220.74"],
      ["30/04/2023", D, "£1,384.00", "£98,236.51"],
      ["29/04/2023", "BankA Architectural Online Booking Reservation #D723932", "£482.44", "£96,852.31"],
      ["29/04/2023", D, "£1,394.22", "£96,370.18"],
      ["27/04/2023", D, "£2,478.20", "£94,975.31"],
      ["26/04/2023", "BankA Swastina Schedule and Reservation Meeting ref 270692", "£1,048.20", "£87,622.79"],
      ["24/04/2023", D, "£3,094.95", "£90,788.17"],
      ["23/04/2023", "BankA St Estates Reservation ref 1623452", "£1,743.99", "£82,967.78"],
      ["19/04/2023", "Bill Payment Talk Talk", "-£176.20", "£80,256.71"],
      ["18/04/2023", D, "£2,954.97", "£80,990.84"],
      ["17/04/2023", "BankA Sq Islam: Floatdoor Order Azarov C: Consultation ref 4366975", "£1,084.22", "£76,980.22"],
      ["14/04/2023", "BankA Beach Theatre Reservation ref 1065712", "£1,752.00", "£78,211.05"],
      ["12/04/2023", D, "£4,111.02", "£74,143.20"],
      ["10/04/2023", "YH Home Supplies & Pets Grab", "-£201.32", "£69,518.21"],
      ["09/04/2023", "BankA A la Carte Reservation ref 12897", "£1,083.20", "£70,213.11"],
      ["07/04/2023", D, "£2,848.00", "£69,092.02"],
      ["07/04/2023", "BankA & E Corporation Meeting ref 059-1045", "£1,047.91", "£66,905.41"],
      ["03/04/2023", D, "£3,251.99", "£64,312.48"],
      ["02/04/2023", "Y.C Motopark, Subaction", "-£492.50", "£57,702.99"],
      ["01/04/2023", D, "£2,074.18", "£62,392.46"]]
  },
  {
    account: ["Account holder under company name: Career Brothers Co_B", "Business type: Limited Company", "Sort code: 08-71-99", "Account number: 46720263", "Currency: GBP"],
    open: "£101,199.41", close: "£122,028.15", period: "From 01/05/2023 to 31/05/2023",
    rows: [
      ["31/05/2023", D, "£1,094.00", "£122,028.74"],
      ["30/05/2023", D, "£3,459.11", "£120,942.03"],
      ["28/05/2023", "BTCL person responsible NI", "-£739.10", "£119,028.61"],
      ["28/05/2023", D, "£1,307.84", "£120,028.47"],
      ["26/05/2023", "BankA Studio 121 consign reservation ref 126817", "£714.02", "£127,402.94"],
      ["25/05/2023", D, "£2,761.31", "£127,513.20"],
      ["23/05/2023", "BankA Studio 121 meeting reservation ref 120957", "£1,341.91", "£125,120.07"],
      ["22/05/2023", D, "£1,153.20", "£123,213.94"],
      ["21/05/2023", "Bill Payment Talk Talk", "-£290.42", "£122,074.91"],
      ["18/05/2023", D, "£1,207.95", "£122,214.52"],
      ["18/05/2023", "BankA Service Manchester Meeting Reservation ref 2014561", "£816.10", "£120,468.49"],
      ["15/05/2023", D, "£1,358.96", "£119,452.46"],
      ["13/05/2023", D, "£4,358.98", "£117,952.30"],
      ["10/05/2023", D, "£5,201.30", "£112,553.42"],
      ["08/05/2023", D, "£1,546.30", "£109,952.46"],
      ["04/05/2023", D, "£1,002.50", "£104,748.92"],
      ["04/05/2023", D, "£2,758.00", "£103,559.83"],
      ["02/05/2023", "Payment Shell Gas", "-£281.30", "£100,890.62"],
      ["01/05/2023", "Transfer Account contents ref ref 4554", "-£210.95", "£101,199.41"]]
  }
];
put("pages", statements.map(s => `<article class="page">
  <div class="logo">${icon("cash", 6)}cashplus bank</div>
  <div class="who"><div><strong>JOHN CITIZEN</strong><strong>Business Account</strong></div><div><b>Address</b><br>150 Woodgrove Rd<br>Glasgow<br>London</div></div>
  <div class="acct"><div>${s.account.join("<br>")}</div><div class="bal"><b>Opening Balance:</b> ${s.open}<br><b>Closing Balance:</b> ${s.close}<p>${s.period}</p></div></div>
  <table><thead><tr><th class="c1">Date</th><th class="c2">Card ending in</th><th>Description</th><th class="c4">Amount</th><th class="c5">Balance</th></tr></thead>
  <tbody>${s.rows.map(r => `<tr><td>${r[0]}</td><td>4435</td><td>${r[1]}</td><td>${r[2]}</td><td>${r[3]}</td></tr>`).join("")}</tbody></table>
  <small>Advanced Payment Solutions Ltd (APS) trading as Cashplus, is registered in England and Wales with Reg number 04947027 at Cottons Centre, London (ref 267987). APS is authorised by the Prudential Regulation Authority and regulated by the Financial Conduct Authority and the Prudential Regulation Authority under registration number. *Please note this statement is provided for information purposes.</small>
</article>`).join(""));

const layers = [["folder", "edite text"], ["type", "Layer 2"], ["image", "Layer 3"], ["type", "citta0000000...<<<<<<<<0 d"],
  ["hidden", "1aa"], ["type", "169"], ["type", "m"], ["type", "1291aa"], ["type", "01.01.1990"]];
const esc = s => s.replace(/</g, "&lt;");
const thumb = k => k === "folder" ? icon("chev", 8) + icon("folder", 10) : k === "image" ? '<i class="pic"></i>' : icon("type", 10);
put("layers", layers.map(([k, name]) => `<div class="layer-row ${k}"><button class="vis" aria-label="Visibility">${k === "hidden" ? '<i class="hid"></i>' : icon("eye", 8)}</button><span class="thumb">${thumb(k)}</span>${esc(name)}</div>`).join(""));
```
